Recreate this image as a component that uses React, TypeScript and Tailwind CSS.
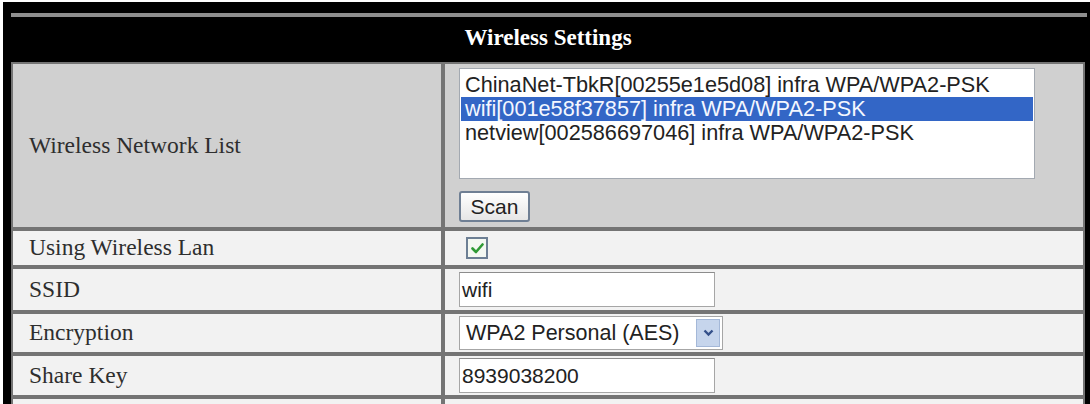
import React from 'react'

const serif = { fontFamily: '"Liberation Serif", "Times New Roman", serif' }
const sans = { fontFamily: '"Liberation Sans", Arial, sans-serif' }

const networks = [
  'ChinaNet-TbkR[00255e1e5d08] infra WPA/WPA2-PSK',
  'wifi[001e58f37857] infra WPA/WPA2-PSK',
  'netview[002586697046] infra WPA/WPA2-PSK',
]

function Label({ children }: { children: React.ReactNode }) {
  return (
    <div
      className="w-[432px] shrink-0 flex items-center pl-[16px] border-2 border-[#747474] text-[23.5px] text-[#2e2e2e]"
      style={serif}
    >
      {children}
    </div>
  )
}

function Row({
  label,
  h,
  dark,
  children,
}: {
  label: string
  h: string
  dark?: boolean
  children: React.ReactNode
}) {
  return (
    <div className={`flex ${h} ${dark ? 'bg-[#d0d0d0]' : 'bg-[#f2f2f2]'}`}>
      <Label>{label}</Label>
      <div className="flex-1 border-2 border-[#747474] pl-[14px] flex flex-col justify-center">
        {children}
      </div>
    </div>
  )
}

export default function App() {
  return (
    <div className="w-[1090px] h-[404px] overflow-hidden bg-white pt-[2px] pl-[3px]">
      <div className="h-full bg-black flex flex-col pl-[8px] pr-[5px]">
        {/* Header */}
        <div className="h-[60px] shrink-0 flex flex-col">
          <div className="mt-[11px] h-[4px] bg-[#8e8e8e] mr-[-2px]" />
          <div
            className="flex-1 flex items-center justify-center text-white font-bold text-[23px] pb-[2px]"
            style={serif}
          >
            Wireless Settings
          </div>
        </div>

        {/* Table */}
        <div className="flex flex-col">
          <Row label="Wireless Network List" h="h-[167px]" dark>
            <div className="flex flex-col justify-start h-full pt-[4px]">
              <div
                className="w-[576px] h-[111px] bg-white border border-[#a3a9b1] pt-[4px] px-[1px] text-[21.7px] leading-[24px] text-[#222] overflow-hidden"
                style={sans}
              >
                {networks.map((n, i) => (
                  <div
                    key={n}
                    className={`pl-[4px] whitespace-nowrap ${
                      i === 1 ? 'bg-[#3366c6] text-[#f4f7ff]' : ''
                    }`}
                  >
                    {n}
                  </div>
                ))}
              </div>
              <button
                className="mt-[12px] w-[71px] h-[31px] rounded-[3px] border-2 border-[#6f7f94] bg-gradient-to-b from-white to-[#e6e6e6] text-[21px] leading-none text-[#222]"
                style={sans}
              >
                Scan
              </button>
            </div>
          </Row>

          <Row label="Using Wireless Lan" h="h-[38px]">
            <div className="ml-[7px] w-[22px] h-[22px] border-2 border-[#6d7f94] bg-[#f4f8f2] flex items-center justify-center">
              <svg width="13" height="11" viewBox="0 0 13 11">
                <path
                  d="M1.5 5.5 L5 9 L11.5 1.5"
                  fill="none"
                  stroke="#2f9a35"
                  strokeWidth="2.6"
                  strokeLinecap="round"
                  strokeLinejoin="round"
                />
              </svg>
            </div>
          </Row>

          <Row label="SSID" h="h-[45px]">
            <div
              className="w-[256px] h-[35px] bg-white border border-[#a6a6a6] border-t-[#8c8c8c] flex items-center pl-[2px] text-[21px] text-[#222]"
              style={sans}
            >
              wifi
            </div>
          </Row>

          <Row label="Encryption" h="h-[42px]">
            <div
              className="w-[264px] h-[34px] bg-white border border-[#a6a6a6] flex items-center text-[21.5px] text-[#222]"
              style={sans}
            >
              <span className="flex-1 pl-[6px] whitespace-nowrap">WPA2 Personal (AES)</span>
              <span className="w-[24px] h-[28px] mr-[2px] bg-[#c6d5ec] border border-[#a4b8d8] flex items-center justify-center">
                <svg width="11" height="8" viewBox="0 0 11 8">
                  <path
                    d="M1.5 1.5 L5.5 5.5 L9.5 1.5"
                    fill="none"
                    stroke="#34508a"
                    strokeWidth="2.4"
                  />
                </svg>
              </span>
            </div>
          </Row>

          <Row label="Share Key" h="h-[43px]">
            <div
              className="w-[256px] h-[35px] bg-white border border-[#a6a6a6] border-t-[#8c8c8c] flex items-center pl-[2px] text-[21px] text-[#222]"
              style={sans}
            >
              8939038200
            </div>
          </Row>

          <div className="flex h-[10px] bg-[#f2f2f2]">
            <div className="w-[432px] border-2 border-b-0 border-[#747474]" />
            <div className="flex-1 border-2 border-b-0 border-[#747474]" />
          </div>
        </div>
      </div>
    </div>
  )
}
